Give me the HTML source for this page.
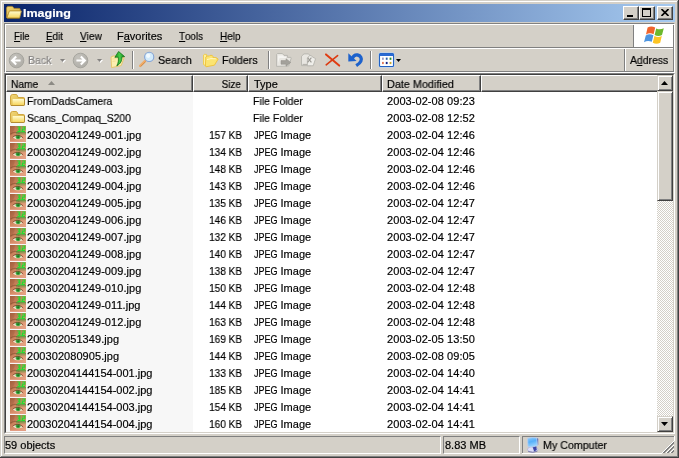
<!DOCTYPE html>
<html><head><meta charset="utf-8"><title>Imaging</title>
<style>
html,body{margin:0;padding:0}
body{width:679px;height:458px;background:#d4d0c8;position:relative;overflow:hidden;font-family:"Liberation Sans",sans-serif;font-size:11px;color:#000;line-height:13px}
.a{position:absolute}
.t{position:absolute;white-space:nowrap;line-height:13px;height:13px;transform-origin:0 0}
u{text-decoration:none;display:inline-block;position:relative;line-height:13px;height:13px;vertical-align:top}
u::after{content:"";position:absolute;left:0;right:0;top:11px;height:1px;background:#000}
/* frame */
.fr{position:absolute}
#title{left:4px;top:4px;width:671px;height:18px;background:linear-gradient(to right,#0a246a,#a6caf0)}
#ttext{left:23px;top:7px;color:#fff;font-weight:bold;transform:scaleX(1.135)}
.cb{position:absolute;top:6px;width:16px;height:14px;background:#d4d0c8;box-sizing:border-box;border:1px solid;border-color:#fff #404040 #404040 #fff;box-shadow:inset -1px -1px 0 #808080}
/* rebar */
#rebar{left:4px;top:23px;width:671px;height:50px;box-sizing:border-box;border:1px solid;border-color:#808080 #fff #fff #808080;box-shadow:inset 1px 1px 0 #fff, inset -1px -1px 0 #808080}
.hl{position:absolute;height:1px}
.vl{position:absolute;width:1px}
.sep{position:absolute;top:51px;width:1px;height:18px;background:#808080;box-shadow:1px 0 0 #fff}
.dis{color:#848280;text-shadow:1px 1px 0 #fff}
/* list */
#list{left:4px;top:73px;width:671px;height:361px;box-sizing:border-box;border:1px solid;border-color:#808080 #fff #fff #808080;background:#fff}
#list2{left:5px;top:74px;width:669px;height:359px;box-sizing:border-box;border:1px solid;border-color:#404040 #d4d0c8 #d4d0c8 #404040}
#namebg{left:6px;top:92px;width:187px;height:340px;background:#f7f7f7}
.hd{position:absolute;top:75px;height:17px;background:#d4d0c8;box-sizing:border-box;border:1px solid;border-color:#fff #404040 #404040 #fff;box-shadow:inset -1px -1px 0 #808080}
.row{position:absolute;left:6px;width:651px;height:17px}
.row .ic{position:absolute;left:4px;top:0}
.c{position:absolute;top:3px;white-space:nowrap;line-height:13px;height:13px;transform-origin:0 0}
.c.n{left:21px}
.c.s{left:187px;width:49px;text-align:right;transform-origin:100% 0;transform:scaleX(0.912)}
.c.t{left:248px}
.c.d{left:381px;letter-spacing:0.07px}
/* scrollbar */
#track{left:657px;top:75px;width:16px;height:357px;background-color:#d4d0c8;background-image:linear-gradient(45deg,#fff 25%,transparent 25%,transparent 75%,#fff 75%),linear-gradient(45deg,#fff 25%,transparent 25%,transparent 75%,#fff 75%);background-size:2px 2px;background-position:0 0,1px 1px}
.sb{position:absolute;left:657px;width:16px;background:#d4d0c8;box-sizing:border-box;border:1px solid;border-color:#d4d0c8 #404040 #404040 #d4d0c8;box-shadow:inset 1px 1px 0 #fff, inset -1px -1px 0 #808080}
/* status */
.sp{position:absolute;top:436px;height:18px;box-sizing:border-box;border:1px solid;border-color:#808080 #fff #fff #808080}
.up{display:inline-block;transform:scaleX(0.82);transform-origin:0 0;width:23.5px}
.t,.c{will-change:transform}
.t,.c{-webkit-text-stroke:0.18px currentColor}
.hd.last{border-right:0;box-shadow:inset 0 -1px 0 #808080}

</style></head>
<body>
<svg width="0" height="0" style="position:absolute">
<defs>
<linearGradient id="gf" x1="0" y1="0" x2="0" y2="1"><stop offset="0" stop-color="#fffbd0"/><stop offset="1" stop-color="#f7d55c"/></linearGradient>
<linearGradient id="gsk" x1="0" y1="0" x2="1" y2="1"><stop offset="0" stop-color="#a8623f"/><stop offset="0.45" stop-color="#d38a64"/><stop offset="1" stop-color="#eaa888"/></linearGradient>
<radialGradient id="gcir" cx="0.35" cy="0.3" r="0.8"><stop offset="0" stop-color="#c4c2bc"/><stop offset="1" stop-color="#aeaca6"/></radialGradient>
<linearGradient id="ggr" x1="0" y1="0" x2="1" y2="0"><stop offset="0" stop-color="#1c9a20"/><stop offset="0.5" stop-color="#44cc48"/><stop offset="1" stop-color="#1a8a1e"/></linearGradient>
<linearGradient id="gbk" x1="0" y1="0" x2="1" y2="1"><stop offset="0" stop-color="#f2d878"/><stop offset="1" stop-color="#d6ac3e"/></linearGradient>
<linearGradient id="gscr" x1="0" y1="0" x2="0.3" y2="1"><stop offset="0" stop-color="#8ccafc"/><stop offset="0.5" stop-color="#56b0fa"/><stop offset="1" stop-color="#9ad4fe"/></linearGradient>
<linearGradient id="ghz" x1="0" y1="0" x2="0" y2="1"><stop offset="0" stop-color="#3c9c34" stop-opacity="0.8"/><stop offset="1" stop-color="#7c8c4c" stop-opacity="0.15"/></linearGradient>
<g id="ofold">
 <path d="M0.6 12.6 V3 Q0.6 1.4 2.2 1.4 H5.8 Q6.6 1.4 7.2 2.2 L8 3.4 H13 Q14.2 3.4 14.2 4.6 V6 H3.6 Z" fill="url(#gbk)" stroke="#b48c2c" stroke-width="0.8"/>
 <path d="M3.4 6 H15.4 L13.6 13 H0.9 Z" fill="url(#gf)" stroke="#c29a36" stroke-width="0.8" stroke-linejoin="round"/>
 <path d="M1 13.4 H13.6" stroke="#8e6e22" stroke-width="0.8"/>
</g>
<g id="fold">
 <path d="M0.5 5 Q0.5 2.6 2.4 2.5 H6 Q6.9 2.5 7.3 3.4 L8 5.5 H13.4 Q14.5 5.5 14.5 6.6 V12.4 Q14.5 13.5 13.4 13.5 H1.6 Q0.5 13.5 0.5 12.4 Z" fill="url(#gbk)" stroke="#d0a640" stroke-width="1"/>
 <rect x="2.6" y="7" width="11.4" height="6" rx="0.6" fill="url(#gf)"/>
 <path d="M1 13.5 H13.6 Q14.5 13.5 14.5 12.4 V6.8" fill="none" stroke="#b48c30" stroke-width="1"/>
</g>
<g id="jpg">
 <rect x="0" y="0" width="16" height="16" fill="url(#gsk)"/>
 <path d="M0 0 H5 L4 4 L2.5 7.5 L0 9 Z" fill="#9c5c3c" opacity="0.35"/>
 <path d="M0.4 8.4 C2.4 6,6.4 5.6,9.6 7.8" stroke="#86502f" stroke-width="1.4" fill="none" opacity="0.6"/>
 <rect x="6.5" y="0" width="9.5" height="6.4" fill="#2cae2c" opacity="0.12"/>
 <rect x="6" y="6" width="10" height="3.2" fill="url(#ghz)"/>
 <path d="M3 11.4 C5 9.1,10 8.9,13 12.2 C10 13.7,5.4 13.7,3 11.4 Z" fill="#ece7d2"/>
 <ellipse cx="8.1" cy="11.1" rx="2.6" ry="2.1" fill="#3aa63a"/>
 <ellipse cx="8.1" cy="11.2" rx="0.9" ry="0.9" fill="#1f6a22"/>
 <path d="M2.6 11.2 C5 8.8,10 8.6,13.2 12" stroke="#6a3c22" stroke-width="0.9" fill="none" opacity="0.8"/>
 <path d="M7.4 1 h2.4 v2.2 h-1.8 h1.8 v2.2 h-2.4 M12.2 1 h2.6 v2.2 h-2.4 v2.2 h2.6" stroke="#22de30" stroke-width="1.2" fill="none"/>
 <rect x="10.6" y="4.8" width="1" height="1.2" fill="#22de30"/>
 <path d="M0 15.5 H16" stroke="#e39c82" stroke-width="1"/>
</g>
</defs>
</svg>
<div class="fr" style="left:1px;top:1px;width:676px;height:1px;background:#fff"></div><div class="fr" style="left:1px;top:1px;width:1px;height:455px;background:#fff"></div><div class="fr" style="left:677px;top:1px;width:1px;height:456px;background:#808080"></div><div class="fr" style="left:1px;top:456px;width:677px;height:1px;background:#808080"></div><div class="fr" style="left:678px;top:0;width:1px;height:458px;background:#404040"></div><div class="fr" style="left:0;top:457px;width:679px;height:1px;background:#404040"></div>
<!-- title bar -->
<div class="a" id="title"></div>
<svg class="a" style="left:6px;top:5px" width="17" height="15"><use href="#ofold"/></svg>
<div class="t" id="ttext">Imaging</div>
<div class="cb" style="left:623px"><div class="a" style="left:3px;top:8px;width:6px;height:2px;background:#000"></div></div>
<div class="cb" style="left:639px"><div class="a" style="left:2px;top:1px;width:9px;height:9px;box-sizing:border-box;border:1px solid #000;border-top-width:2px"></div></div>
<div class="cb" style="left:657px"><svg class="a" style="left:3px;top:2px" width="8" height="7"><path d="M0.5 0 L7.5 7 M7.5 0 L0.5 7" stroke="#000" stroke-width="1.6" fill="none"/></svg></div>
<!-- rebar -->
<div class="a" id="rebar"></div>
<div class="hl" style="left:6px;top:47px;width:667px;background:#808080"></div>
<div class="hl" style="left:6px;top:48px;width:667px;background:#fff"></div>
<!-- menu -->
<div class="t" style="left:14px;top:30px;transform:scaleX(0.882)"><u>F</u>ile</div>
<div class="t" style="left:46px;top:30px;transform:scaleX(0.895)"><u>E</u>dit</div>
<div class="t" style="left:80px;top:30px;transform:scaleX(0.917)"><u>V</u>iew</div>
<div class="t" style="left:117px;top:30px">F<u>a</u>vorites</div>
<div class="t" style="left:179px;top:30px;transform:scaleX(0.889)"><u>T</u>ools</div>
<div class="t" style="left:220px;top:30px;transform:scaleX(0.909)"><u>H</u>elp</div>
<!-- flag box -->
<div class="a" style="left:633px;top:25px;width:1px;height:22px;background:#808080"></div>
<div class="a" style="left:634px;top:24px;width:39px;height:23px;background:#fff"></div>
<svg class="a" style="left:642px;top:25px" width="24" height="21" viewBox="0 0 24 21">
 <path d="M5.6 2.6 C8 1.2,10.5 1.2,13.2 2.6 L11.6 9.2 C9.2 8,6.6 8,4 9.4 Z" fill="#f0642c"/>
 <path d="M14.2 3.4 C16.6 4.6,19 4.6,21.8 3.2 L20 10 C17.4 11.4,15 11.2,12.6 10 Z" fill="#6cb82c"/>
 <path d="M3.8 10.4 C6.2 9,8.8 9,11.4 10.2 L9.8 16.8 C7.2 15.6,4.6 15.6,2 17.2 Z" fill="#4c94e0"/>
 <path d="M12.4 11 C14.8 12.2,17.2 12.4,19.8 11 L18.2 17.8 C15.6 19.2,13.2 19,10.8 17.8 Z" fill="#fcc424"/>
</svg>
<!-- toolbar -->
<svg class="a" style="left:8px;top:52px" width="17" height="17" viewBox="0 0 17 17"><circle cx="8.5" cy="8.5" r="7.3" fill="url(#gcir)" stroke="#a3a19b" stroke-width="0.9"/><path d="M4.2 8.5 H12.6 M8.2 4.4 L4.1 8.5 L8.2 12.6" stroke="#fff" stroke-width="2.1" fill="none"/></svg>
<div class="t dis" style="left:28px;top:54px;transform:scaleX(0.96)">Back</div>
<svg class="a" style="left:60px;top:59px" width="7" height="5"><path d="M1 1 H6 L3.5 4 Z" fill="#fff"/><path d="M0 0 H5 L2.5 3 Z" fill="#848280"/></svg>
<svg class="a" style="left:72px;top:52px" width="17" height="17" viewBox="0 0 17 17"><circle cx="8.5" cy="8.5" r="7.3" fill="url(#gcir)" stroke="#a3a19b" stroke-width="0.9"/><path d="M12.8 8.5 H4.4 M8.8 4.4 L12.9 8.5 L8.8 12.6" stroke="#fff" stroke-width="2.1" fill="none"/></svg>
<svg class="a" style="left:97px;top:59px" width="7" height="5"><path d="M1 1 H6 L3.5 4 Z" fill="#fff"/><path d="M0 0 H5 L2.5 3 Z" fill="#848280"/></svg>
<!-- up folder -->
<svg class="a" style="left:110px;top:51px" width="16" height="18" viewBox="0 0 16 18">
 <path d="M1 6.2 L3 5 H6.4 L7.4 6 H13.6 L14 7 L11.2 14.6 L1.6 16.6 Z" fill="#fbeeb0" stroke="#e6c468" stroke-width="0.9"/>
 <path d="M2.4 8 L7 7.6 M2.6 10.4 L5.6 10" stroke="#f0d78c" stroke-width="0.8" fill="none"/>
 <path d="M8.6 0.5 L14.6 5.6 L11.9 5.9 C12.1 9.2,11 12.6,6.8 14.8 C8.6 11.6,8.7 8.6,8.1 6.1 L4.9 6.3 Z" fill="url(#ggr)" stroke="#127016" stroke-width="0.8" stroke-linejoin="round"/>
</svg>
<div class="sep" style="left:132px"></div>
<!-- search -->
<svg class="a" style="left:139px;top:51px" width="16" height="17" viewBox="0 0 16 17">
 <path d="M1.1 14.9 L6.2 9.9" stroke="#f0ac68" stroke-width="2.3" stroke-linecap="round"/>
 <path d="M1.6 15.6 L6.6 10.7" stroke="#c27a36" stroke-width="0.7"/>
 <circle cx="10.2" cy="5.9" r="4.6" fill="#d2ebfb" stroke="#84a4d6" stroke-width="1.1"/>
 <circle cx="9.2" cy="4.8" r="2.1" fill="#f2faff"/>
</svg>
<div class="t" style="left:158px;top:54px;transform:scaleX(0.97)">Search</div>
<!-- folders -->
<svg class="a" style="left:202px;top:52px" width="17" height="16" viewBox="0 0 17 16">
 <path d="M1.5 3 L2.2 2.4 H4.6 V12.6 L3.2 13.4 L1.5 12.6 Z" fill="#fdf0a0" stroke="#efcb4a" stroke-width="0.9"/>
 <path d="M3.8 5 L5 4 H7.4 L8 3.4 H10.2 L11 4.6 V5.6 H14 L16.2 7 L12.4 13.2 L4 14.8 L3.4 14 Z" fill="#fbe472" stroke="#eec23a" stroke-width="0.9" stroke-linejoin="round"/>
 <path d="M5 7.6 L9 6.6 L13.8 6.8" stroke="#fffbd0" stroke-width="0.9" fill="none"/>
</svg>
<div class="t" style="left:222px;top:54px;transform:scaleX(0.971)">Folders</div>
<div class="sep" style="left:268px"></div>
<!-- move to (disabled) -->
<svg class="a" style="left:276px;top:52px" width="17" height="16" viewBox="0 0 17 16">
 <path d="M0.6 14.4 V2.4 L1.6 1.5 H6.4 L8 3.4 H11.4 V5.4 H14.9 L15.3 6 L12.6 14 Z" fill="#e8e6e1" stroke="#b6b4ae" stroke-width="0.9" stroke-linejoin="round"/>
 <path d="M2 3.4 H7 L8 4.8 H10 V6 H3.6 L2 11 Z" fill="#f5f4f1"/>
 <path d="M5 8.6 H10 V6.7 L14.8 10.4 L10 14.2 V12.2 H5 Z" fill="#a3a19b" stroke="#918f89" stroke-width="0.5"/>
</svg>
<!-- copy to (disabled) -->
<svg class="a" style="left:300px;top:52px" width="17" height="16" viewBox="0 0 17 16">
 <path d="M1.5 13.6 V4.2 L4 1.9 H8.6 L10.6 4.4 V13.6 Z" fill="#e8e6e1" stroke="#b6b4ae" stroke-width="0.9" stroke-linejoin="round"/>
 <path d="M7.4 13.8 V6.4 L9.4 3.6 H11.4 L12.4 5 L15.6 6.6 L13.2 13.8 Z" fill="#efeeea" stroke="#b6b4ae" stroke-width="0.9" stroke-linejoin="round"/>
 <path d="M7.6 5.6 L11.4 10.4 M11.4 5.6 L7.6 10.4" fill="none" stroke="#9c9a94" stroke-width="1.1"/>
 <path d="M2.6 12.4 H7" stroke="#a8a6a0" stroke-width="0.9"/>
</svg>
<!-- delete -->
<svg class="a" style="left:324px;top:52px" width="17" height="16" viewBox="0 0 17 16"><path d="M2 2.4 L15.2 13.6" stroke="#e03c12" stroke-width="2" fill="none" stroke-linecap="round"/><path d="M13.6 3.6 L2.2 12.8" stroke="#dc3a10" stroke-width="1.6" fill="none" stroke-linecap="round"/></svg>
<!-- undo -->
<svg class="a" style="left:347px;top:52px" width="17" height="16" viewBox="0 0 17 16">
 <path d="M5.2 6.6 C6.4 3.6,8.6 2.7,10.6 3 C13.6 3.5,15.1 6.6,13.9 9.1 C13.1 10.9,11.6 12.2,9.2 13.7" fill="none" stroke="#1d62cc" stroke-width="3.3"/>
 <path d="M1.3 1.2 L1.3 9.5 L9.6 9 Z" fill="#1d62cc"/>
</svg>
<div class="sep" style="left:370px"></div>
<!-- views -->
<svg class="a" style="left:378px;top:52px" width="17" height="16" viewBox="0 0 17 16">
 <rect x="0.6" y="0.6" width="15.8" height="14.8" rx="1.6" fill="#b4d6fb"/>
 <rect x="1.5" y="1.5" width="14" height="13" rx="1" fill="#fff" stroke="#2262c4" stroke-width="1.1"/>
 <path d="M1.5 4 V2.5 Q1.5 1.5 2.5 1.5 H14.5 Q15.5 1.5 15.5 2.5 V4 Z" fill="#2a6ad2"/>
 <rect x="4" y="5.6" width="1.8" height="2.2" fill="#9c9cc4"/><rect x="7.8" y="5.6" width="1.8" height="2.2" fill="#2c62aa"/><rect x="11.6" y="5.6" width="1.8" height="2.2" fill="#228a32"/>
 <rect x="4" y="9.9" width="1.8" height="2.2" fill="#e07a5a"/><rect x="7.8" y="9.9" width="1.8" height="2.2" fill="#102284"/><rect x="11.6" y="9.9" width="1.8" height="2.2" fill="#c8a832"/>
</svg>
<svg class="a" style="left:396px;top:59px" width="6" height="4"><path d="M0 0 H5 L2.5 3 Z" fill="#000"/></svg>
<!-- address band -->
<div class="a" style="left:624px;top:49px;width:1px;height:22px;background:#808080"></div>
<div class="a" style="left:625px;top:49px;width:1px;height:22px;background:#fff"></div>
<div class="t" style="left:630px;top:54px;transform:scaleX(0.95)">A<u>d</u>dress</div>
<!-- list -->
<div class="a" id="list"></div><div class="a" id="list2"></div>
<div class="a" id="namebg"></div>
<div class="hd" style="left:6px;width:187px"></div>
<div class="hd" style="left:193px;width:55px"></div>
<div class="hd" style="left:248px;width:134px"></div>
<div class="hd" style="left:382px;width:99px"></div>
<div class="hd last" style="left:481px;width:176px"></div>
<div class="t" style="left:11px;top:78px;transform:scaleX(0.929)">Name</div>
<svg class="a" style="left:48px;top:81px" width="8" height="5"><path d="M0 4 L3.5 0 L7 4 Z" fill="#8c8a84"/></svg>
<div class="t" style="left:193px;top:78px;width:48px;text-align:right;transform-origin:100% 0;transform:scaleX(0.9)">Size</div>
<div class="t" style="left:254px;top:78px">Type</div>
<div class="t" style="left:387px;top:78px;transform:scaleX(0.985)">Date Modified</div>
<!-- scrollbar -->
<div class="a" id="track"></div>
<div class="sb" style="top:75px;height:16px"><svg class="a" style="left:3px;top:5px" width="7" height="4"><path d="M0 4 L3.5 0 L7 4 Z" fill="#000"/></svg></div>
<div class="sb" style="top:91px;height:110px"></div>
<div class="sb" style="top:416px;height:16px"><svg class="a" style="left:3px;top:5px" width="7" height="4"><path d="M0 0 L3.5 4 L7 0 Z" fill="#000"/></svg></div>
<div id="rows">
<div class="row" style="top:92px"><svg class="ic" width="16" height="16"><use href="#fold"/></svg><span class="c n" style="transform:scaleX(0.944)">FromDadsCamera</span><span class="c s"></span><span class="c t" style="left:247px;transform:scaleX(0.96)">File Folder</span><span class="c d">2003-02-08 09:23</span></div>
<div class="row" style="top:109px"><svg class="ic" width="16" height="16"><use href="#fold"/></svg><span class="c n" style="transform:scaleX(0.944)">Scans_Compaq_S200</span><span class="c s"></span><span class="c t" style="left:247px;transform:scaleX(0.96)">File Folder</span><span class="c d">2003-02-08 12:52</span></div>
<div class="row" style="top:126px"><svg class="ic" width="16" height="16"><use href="#jpg"/></svg><span class="c n" style="letter-spacing:0.06px">200302041249-001.jpg</span><span class="c s">157 KB</span><span class="c t"><span class="up">JPEG</span> Image</span><span class="c d">2003-02-04 12:46</span></div>
<div class="row" style="top:143px"><svg class="ic" width="16" height="16"><use href="#jpg"/></svg><span class="c n" style="letter-spacing:0.06px">200302041249-002.jpg</span><span class="c s">134 KB</span><span class="c t"><span class="up">JPEG</span> Image</span><span class="c d">2003-02-04 12:46</span></div>
<div class="row" style="top:160px"><svg class="ic" width="16" height="16"><use href="#jpg"/></svg><span class="c n" style="letter-spacing:0.06px">200302041249-003.jpg</span><span class="c s">148 KB</span><span class="c t"><span class="up">JPEG</span> Image</span><span class="c d">2003-02-04 12:46</span></div>
<div class="row" style="top:177px"><svg class="ic" width="16" height="16"><use href="#jpg"/></svg><span class="c n" style="letter-spacing:0.06px">200302041249-004.jpg</span><span class="c s">143 KB</span><span class="c t"><span class="up">JPEG</span> Image</span><span class="c d">2003-02-04 12:46</span></div>
<div class="row" style="top:194px"><svg class="ic" width="16" height="16"><use href="#jpg"/></svg><span class="c n" style="letter-spacing:0.06px">200302041249-005.jpg</span><span class="c s">135 KB</span><span class="c t"><span class="up">JPEG</span> Image</span><span class="c d">2003-02-04 12:47</span></div>
<div class="row" style="top:211px"><svg class="ic" width="16" height="16"><use href="#jpg"/></svg><span class="c n" style="letter-spacing:0.06px">200302041249-006.jpg</span><span class="c s">146 KB</span><span class="c t"><span class="up">JPEG</span> Image</span><span class="c d">2003-02-04 12:47</span></div>
<div class="row" style="top:228px"><svg class="ic" width="16" height="16"><use href="#jpg"/></svg><span class="c n" style="letter-spacing:0.06px">200302041249-007.jpg</span><span class="c s">132 KB</span><span class="c t"><span class="up">JPEG</span> Image</span><span class="c d">2003-02-04 12:47</span></div>
<div class="row" style="top:245px"><svg class="ic" width="16" height="16"><use href="#jpg"/></svg><span class="c n" style="letter-spacing:0.06px">200302041249-008.jpg</span><span class="c s">140 KB</span><span class="c t"><span class="up">JPEG</span> Image</span><span class="c d">2003-02-04 12:47</span></div>
<div class="row" style="top:262px"><svg class="ic" width="16" height="16"><use href="#jpg"/></svg><span class="c n" style="letter-spacing:0.06px">200302041249-009.jpg</span><span class="c s">138 KB</span><span class="c t"><span class="up">JPEG</span> Image</span><span class="c d">2003-02-04 12:47</span></div>
<div class="row" style="top:279px"><svg class="ic" width="16" height="16"><use href="#jpg"/></svg><span class="c n" style="letter-spacing:0.06px">200302041249-010.jpg</span><span class="c s">150 KB</span><span class="c t"><span class="up">JPEG</span> Image</span><span class="c d">2003-02-04 12:48</span></div>
<div class="row" style="top:296px"><svg class="ic" width="16" height="16"><use href="#jpg"/></svg><span class="c n" style="letter-spacing:0.06px">200302041249-011.jpg</span><span class="c s">144 KB</span><span class="c t"><span class="up">JPEG</span> Image</span><span class="c d">2003-02-04 12:48</span></div>
<div class="row" style="top:313px"><svg class="ic" width="16" height="16"><use href="#jpg"/></svg><span class="c n" style="letter-spacing:0.06px">200302041249-012.jpg</span><span class="c s">163 KB</span><span class="c t"><span class="up">JPEG</span> Image</span><span class="c d">2003-02-04 12:48</span></div>
<div class="row" style="top:330px"><svg class="ic" width="16" height="16"><use href="#jpg"/></svg><span class="c n" style="letter-spacing:0.06px">200302051349.jpg</span><span class="c s">169 KB</span><span class="c t"><span class="up">JPEG</span> Image</span><span class="c d">2003-02-05 13:50</span></div>
<div class="row" style="top:347px"><svg class="ic" width="16" height="16"><use href="#jpg"/></svg><span class="c n" style="letter-spacing:0.06px">200302080905.jpg</span><span class="c s">144 KB</span><span class="c t"><span class="up">JPEG</span> Image</span><span class="c d">2003-02-08 09:05</span></div>
<div class="row" style="top:364px"><svg class="ic" width="16" height="16"><use href="#jpg"/></svg><span class="c n" style="letter-spacing:0px">20030204144154-001.jpg</span><span class="c s">133 KB</span><span class="c t"><span class="up">JPEG</span> Image</span><span class="c d">2003-02-04 14:40</span></div>
<div class="row" style="top:381px"><svg class="ic" width="16" height="16"><use href="#jpg"/></svg><span class="c n" style="letter-spacing:0px">20030204144154-002.jpg</span><span class="c s">185 KB</span><span class="c t"><span class="up">JPEG</span> Image</span><span class="c d">2003-02-04 14:41</span></div>
<div class="row" style="top:398px"><svg class="ic" width="16" height="16"><use href="#jpg"/></svg><span class="c n" style="letter-spacing:0px">20030204144154-003.jpg</span><span class="c s">154 KB</span><span class="c t"><span class="up">JPEG</span> Image</span><span class="c d">2003-02-04 14:41</span></div>
<div class="row" style="top:415px"><svg class="ic" width="16" height="16"><use href="#jpg"/></svg><span class="c n" style="letter-spacing:0px">20030204144154-004.jpg</span><span class="c s">160 KB</span><span class="c t"><span class="up">JPEG</span> Image</span><span class="c d">2003-02-04 14:41</span></div>
</div>
<!-- status bar -->
<div class="sp" style="left:4px;width:437px"></div>
<div class="sp" style="left:443px;width:77px"></div>
<div class="a" style="left:522px;top:436px;width:152px;height:1px;background:#808080"></div><div class="a" style="left:522px;top:436px;width:1px;height:17px;background:#808080"></div><div class="a" style="left:674px;top:436px;width:1px;height:5px;background:#fff"></div><div class="a" style="left:522px;top:453px;width:140px;height:1px;background:#fff"></div>
<div class="t" style="left:5px;top:439px">59 objects</div>
<div class="t" style="left:445px;top:439px">8.83 MB</div>
<svg class="a" style="left:526px;top:437px" width="14" height="17" viewBox="0 0 14 17">
 <ellipse cx="6.7" cy="12.4" rx="5.2" ry="2.7" fill="#dedef6" stroke="#a4a4d0" stroke-width="0.6"/>
 <path d="M6.4 9.6 L10.2 8.8 L10.8 13 L8.2 14.6 Z" fill="#3c46a6"/>
 <path d="M10.8 0.9 L12.2 1.8 L12.2 7.8 L11.4 8.6 Z" fill="#3c4ca8"/>
 <path d="M1.6 1.3 Q6 0.1 10.8 0.9 L11.4 8.6 Q7 10.6 2 9.7 Z" fill="url(#gscr)" stroke="#b6ceef" stroke-width="0.9"/>
 <path d="M2.2 14.5 Q6.6 16.3 11.4 14.2" stroke="#6a6aa6" stroke-width="0.8" fill="none"/>
</svg>
<div class="t" style="left:543px;top:439px;transform:scaleX(0.97)">My Computer</div>
<svg class="a" style="left:662px;top:441px" width="12" height="12" shape-rendering="crispEdges"><path d="M11 0h1v1h-1zM10 1h1v1h-1zM9 2h1v1h-1zM8 3h1v1h-1zM7 4h1v1h-1zM11 4h1v1h-1zM6 5h1v1h-1zM10 5h1v1h-1zM5 6h1v1h-1zM9 6h1v1h-1zM4 7h1v1h-1zM8 7h1v1h-1zM3 8h1v1h-1zM7 8h1v1h-1zM11 8h1v1h-1zM2 9h1v1h-1zM6 9h1v1h-1zM10 9h1v1h-1zM1 10h1v1h-1zM5 10h1v1h-1zM9 10h1v1h-1zM0 11h1v1h-1zM4 11h1v1h-1zM8 11h1v1h-1z" fill="#fff"/><path d="M11 1h1v1h-1zM10 2h2v1h-2zM9 3h2v1h-2zM8 4h2v1h-2zM7 5h2v1h-2zM11 5h1v1h-1zM6 6h2v1h-2zM10 6h2v1h-2zM5 7h2v1h-2zM9 7h2v1h-2zM4 8h2v1h-2zM8 8h2v1h-2zM3 9h2v1h-2zM7 9h2v1h-2zM11 9h1v1h-1zM2 10h2v1h-2zM6 10h2v1h-2zM10 10h2v1h-2zM1 11h2v1h-2zM5 11h2v1h-2zM9 11h2v1h-2z" fill="#808080"/></svg>
</body></html>
